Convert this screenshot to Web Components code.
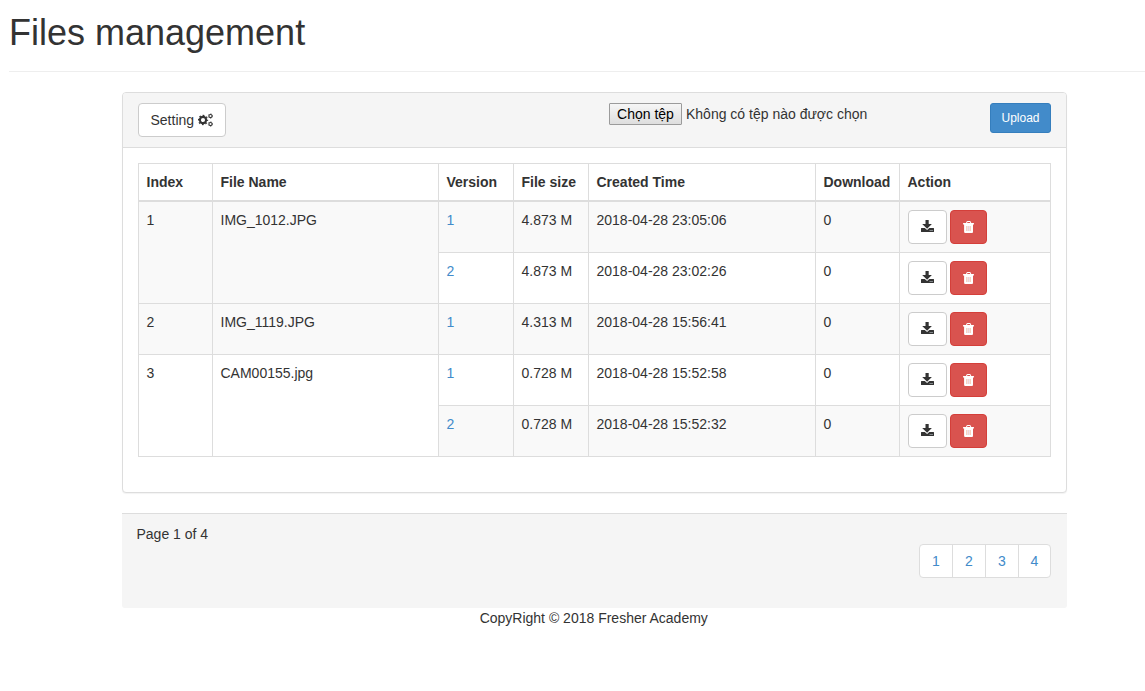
<!DOCTYPE html>
<html lang="vi">
<head>
<meta charset="utf-8">
<title>Files management</title>
<style>
body{margin:0;background:#fff;color:#333;font:14px/20px "Liberation Sans",Arial,sans-serif;overflow:hidden}
</style>
</head>
<body>
<files-page></files-page>
<script>
const define = (name, html) => customElements.define(name, class extends HTMLElement {
  connectedCallback() {
    if (this.shadowRoot) return;
    const root = this.attachShadow({mode: 'open'});
    const t = document.createElement('template');
    t.innerHTML = '<style>*{box-sizing:border-box}</style>' + (typeof html === 'function' ? html(this) : html);
    root.append(t.content.cloneNode(true));
  }
});

const icons = {
  cogs: [15, '0 0 15 14', '<g fill="none" stroke="currentColor"><circle cx="5" cy="7" r="3.1" stroke-width="2.1"/><circle cx="5" cy="7" r="4.500" stroke-width="1.300" stroke-dasharray="1.767 1.767" stroke-dashoffset=".88"/><circle cx="12.500" cy="3" r="1.600" stroke-width="1.050"/><circle cx="12.500" cy="3" r="2.250" stroke-width=".6" stroke-dasharray="1.178 1.178"/><circle cx="12.500" cy="11" r="1.600" stroke-width="1.050"/><circle cx="12.500" cy="11" r="2.250" stroke-width=".6" stroke-dasharray="1.178 1.178"/></g>'],
  download: [13, '0 0 13 14', '<path d="M4.500 0h3.200v4h3.200L6.100 8.800 1.200 4h3.300z"/><path d="M.5 8h3.300L6.100 9.900 8.300 8h4.200q.5 0 .5.5v3q0 .5-.5.5H.5q-.5 0-.5-.5v-3Q0 8 .5 8z"/><path fill="#a5acb0" d="M8.500 10H12v.7H8.500z"/>'],
  trash: [11, '0 0 11 14', '<path fill-rule="evenodd" d="M3 3l.6-1.4Q3.9 1 4.5 1h2.3q.6 0 .9.6L8.3 3h2.2q.5 0 .5.5v.7q0 .3-.3.3H10v7.2q0 1.3-1 1.3H2.2q-1.1 0-1.1-1.3V4.5H.4Q0 4.500 0 4.200v-.7Q0 3 .5 3zM4 3h3.300L6.800 2H4.500z"/><path fill="#f8d3c0" d="M3 6h1.200v5H3zM6.800 6H8v5H6.800z"/><path fill="#ecdce9" d="M4.200 6h2.600v5H4.200z"/><path fill="#f8d3c0" d="M5.200 6h.7v5h-.7z"/>']
};

define('fa-icon', el => {
  const [w, box, art] = icons[el.getAttribute('name')];
  return `<style>:host{display:inline-block;width:${w}px;height:14px;line-height:1}svg{display:block}</style>
  <svg width="${w}" height="14" viewBox="${box}" fill="currentColor">${art}</svg>`;
});

define('ui-button', `<style>
:host{display:inline-block}
button{display:flex;align-items:center;gap:3.5px;margin:0;font:inherit;color:#333;background:#fff;border:1px solid #ccc;border-radius:4px;padding:6px 12px;height:34px;white-space:nowrap}
:host([kind=setting]) button{width:88px;padding:6px 11.5px}
:host([kind=danger]) button{color:#fff;background:#d9534f;border-color:#d43f3a}
:host([kind=primary]) button{color:#fff;background:#428bca;border-color:#357ebd;border-radius:3px;font-size:12px;line-height:18px;height:30px;padding:5px 10px;width:61px;justify-content:center}
</style><button><slot></slot></button>`);

define('file-picker', `<style>
:host{display:flex;align-items:center;gap:4px;height:22px;white-space:nowrap}
button{font:inherit;color:#000;width:73px;height:22px;padding:0;border:1px solid #9b9b9b;border-radius:1px;background:linear-gradient(#f6f6f6,#dedede)}
</style><button>Chọn tệp</button><span>Không có tệp nào được chọn</span>`);

define('page-header', `<style>
:host{display:block;border-bottom:1px solid #eee;padding:13px 0 9px;height:72px;margin-bottom:20px;box-sizing:border-box}
h1{margin:0;font-size:36px;font-weight:400;line-height:40px}
</style><h1><slot></slot></h1>`);

define('ui-panel', `<style>
:host{display:block;box-sizing:border-box;height:401px;border:1px solid #ddd;border-radius:4px;box-shadow:0 1px 1px rgba(0,0,0,.05);background:#fff}
header{display:flex;align-items:flex-start;height:55px;padding:10px 15px;background:#f5f5f5;border-bottom:1px solid #ddd;border-radius:3px 3px 0 0}
.body{padding:15px}
</style><header><slot name="heading"></slot></header><div class="body"><slot></slot></div>`);

const files = [
  [1, 'IMG_1012.JPG', [[1, '4.873 M', '2018-04-28 23:05:06'], [2, '4.873 M', '2018-04-28 23:02:26']]],
  [2, 'IMG_1119.JPG', [[1, '4.313 M', '2018-04-28 15:56:41']]],
  [3, 'CAM00155.jpg', [[1, '0.728 M', '2018-04-28 15:52:58'], [2, '0.728 M', '2018-04-28 15:52:32']]]
];

define('files-table', () => {
  const rows = files.map(([n, name, versions]) => versions.map(([v, size, time], i) =>
    `<tr>${i ? '' : `<td rowspan="${versions.length}">${n}</td><td rowspan="${versions.length}">${name}</td>`}
    <td><a>${v}</a></td><td>${size}</td><td>${time}</td><td>0</td>
    <td><div><ui-button><fa-icon name="download"></fa-icon></ui-button><ui-button kind="danger"><fa-icon name="trash"></fa-icon></ui-button></div></td></tr>`).join('')).join('');
  return `<style>
:host{display:block}
table{width:913px;table-layout:fixed;border-collapse:separate;border-spacing:0;border:solid #ddd;border-width:1px 0 0 1px;font:inherit}
th,td{padding:8px 0 8px 7.5px;text-align:left;vertical-align:top;border:solid #ddd;border-width:0 1px 1px 0;white-space:nowrap}
td{height:51px}
th{height:38px;border-bottom-width:2px}
tbody tr:nth-child(odd) td{background:#f9f9f9}
a{color:#428bca}
div{display:flex;gap:3px;padding-left:.5px}
</style><table><colgroup>${[74,226,75,75,227,84,151].map(w => `<col style="width:${w}px">`).join('')}</colgroup>
<thead><tr>${['Index','File Name','Version','File size','Created Time','Download','Action'].map(h => `<th>${h}</th>`).join('')}</tr></thead><tbody>${rows}</tbody></table>`;
});

define('page-links', `<style>
:host{display:flex;width:132px;height:34px;box-sizing:border-box;border:1px solid #ddd;border-radius:4px;background:#fff;overflow:hidden}
a{flex:0 0 33px;text-align:center;line-height:32px;color:#428bca;border-right:1px solid #ddd}
a:last-child{flex:1;border:0}
</style><a>1</a><a>2</a><a>3</a><a>4</a>`);

define('panel-footer', `<style>
:host{display:flex;flex-direction:column;box-sizing:border-box;height:95px;margin-top:20px;padding:10px 16px 10px 14.5px;background:#f5f5f5;border-top:1px solid #ddd;border-radius:0 0 3px 3px}
page-links{align-self:flex-end}
</style><div><slot></slot></div><page-links></page-links>`);

define('files-page', `<style>
:host{display:block;padding-left:9px}
main{width:945px;margin-left:113px}
file-picker{margin-left:383px}
.upload{margin-left:auto}
.copy{text-align:center;padding-right:1.5px}
</style>
<page-header>Files management</page-header>
<main>
<ui-panel><ui-button slot="heading" kind="setting">Setting <fa-icon name="cogs"></fa-icon></ui-button><file-picker slot="heading"></file-picker><ui-button slot="heading" class="upload" kind="primary">Upload</ui-button>
<files-table></files-table></ui-panel>
<panel-footer>Page 1 of 4</panel-footer>
<div class="copy">CopyRight © 2018 Fresher Academy</div>
</main>`);
</script>
</body>
</html>
